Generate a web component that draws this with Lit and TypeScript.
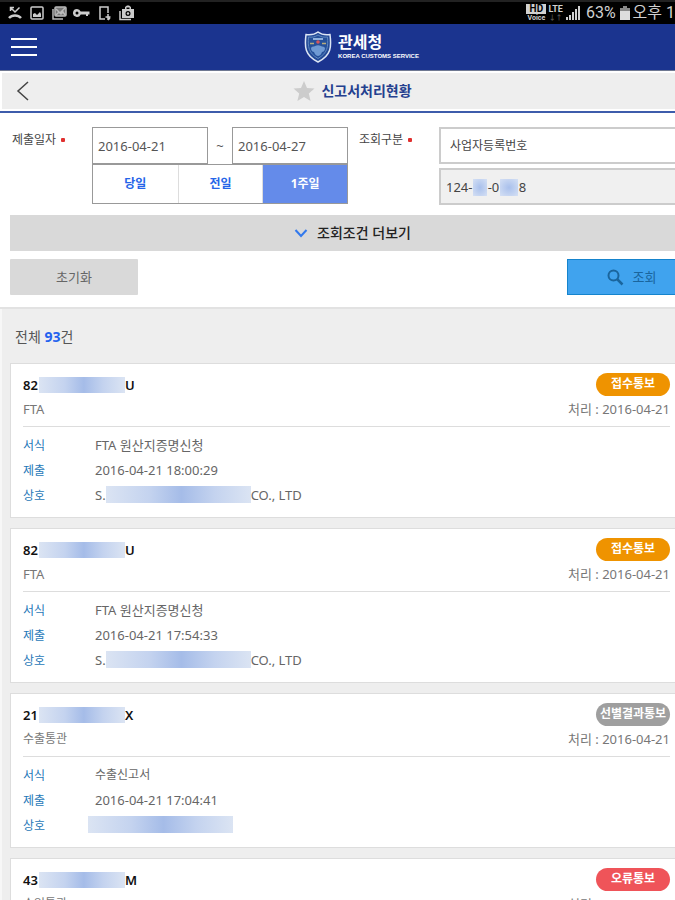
import { LitElement, html, css, svg, nothing } from "lit";
import { customElement, property } from "lit/decorators.js";

interface Declaration {
  head: string;
  tail: string;
  kind: string;
  status: string;
  tone: "orange" | "gray" | "red";
  form?: string;
  submitted?: string;
  nameStart?: string;
  nameEnd?: string;
}

const DECLARATIONS: Declaration[] = [
  { head: "82", tail: "U", kind: "FTA", status: "접수통보", tone: "orange", form: "FTA 원산지증명신청", submitted: "2016-04-21 18:00:29", nameStart: "S.", nameEnd: "CO., LTD" },
  { head: "82", tail: "U", kind: "FTA", status: "접수통보", tone: "orange", form: "FTA 원산지증명신청", submitted: "2016-04-21 17:54:33", nameStart: "S.", nameEnd: "CO., LTD" },
  { head: "21", tail: "X", kind: "수출통관", status: "선별결과통보", tone: "gray", form: "수출신고서", submitted: "2016-04-21 17:04:41" },
  { head: "43", tail: "M", kind: "수입통관", status: "오류통보", tone: "red" },
];

@customElement("status-bar")
class StatusBar extends LitElement {
  static styles = css`
    :host { display: flex; justify-content: space-between; align-items: center; height: 24px; box-sizing: border-box;
      border-top: 2px solid #222; background: #000; color: #d0d0d0; overflow: hidden; white-space: nowrap;
      font-family: Roboto, "Noto Sans CJK KR", sans-serif; font-size: 16px; line-height: 22px; }
    .left { display: flex; gap: 6px; padding-left: 7px; }
    .right { display: flex; align-items: center; }
    svg { display: block; }
    .hd { display: grid; justify-items: center; width: 20px; font-size: 7px; line-height: 8px; font-weight: 700; }
    .hd-box { background: #d0d0d0; color: #000; width: 20px; text-align: center; font-size: 10px; line-height: 10px; }
    .lte { display: grid; justify-items: center; margin: 0 2px; font-size: 9px; line-height: 10px; font-weight: 700; }
    .arrows { font-size: 7px; line-height: 8px; color: #555; }
    .signal { margin-right: 5px; }
    .battery { margin: 0 3px 0 4px; }
  `;
  render() {
    return html`
      <div class="left">
        <svg width="16" height="16" viewBox="0 0 16 16" fill="none" stroke="#ccc"><path d="M3.500 2.500L8 7l4.500-4.500M3.500 6V2.500H7" stroke-width="1.500"/><path d="M2 13c3-3.500 9-3.500 12 0" stroke-width="2.500"/></svg>
        <svg width="16" height="16" viewBox="0 0 16 16" fill="none" stroke="#ccc" stroke-width="1.500"><rect x="2" y="2" width="12" height="12" rx="1"/><path d="M4 12V9l2-1 2 2 3-3 1 2v3z" fill="#ccc" stroke="none"/></svg>
        <svg width="16" height="16" viewBox="0 0 16 16" fill="none" stroke="#bbb" stroke-width="1.500"><path d="M2 4v10h10"/><rect x="4" y="2" width="11" height="9" rx="1" fill="#777"/><path d="M5 4l4 4 5-5M5 10l3-3 2 2 2-2 2 3"/></svg>
        <svg width="17" height="16" viewBox="0 0 17 16" fill="#ccc"><path fill-rule="evenodd" d="M4 4a4 4 0 1 0 3.700 5.500H13V11h2V9.500h1.500v-3H7.700A4 4 0 0 0 4 4zm0 2.500a1.500 1.500 0 1 1 0 3 1.500 1.500 0 0 1 0-3z"/></svg>
        <svg width="16" height="16" viewBox="0 0 16 16" fill="none" stroke="#ccc" stroke-width="1.500"><path d="M12 8V2H4v12h5"/><path d="M12 9v6M9.500 12h5M12 15l2-2"/></svg>
        <svg width="18" height="16" viewBox="0 0 18 16" fill="#ccc"><path d="M2 6v8.500h11" fill="none" stroke="#ccc" stroke-width="1.500"/><path fill-rule="evenodd" d="M4 4h3V2l2-1.500h2L13 2v2h3v9H4zm4.500 0h3V2.500h-3zM10 6a2.500 2.500 0 1 0 0 5 2.500 2.500 0 0 0 0-5z"/><circle cx="10" cy="8.500" r="1.200"/></svg>
      </div>
      <div class="right">
        <div class="hd"><span class="hd-box">HD</span><span>Voice</span></div>
        <div class="lte"><span>LTE</span><span class="arrows">↓↑</span></div>
        <svg class="signal" width="16" height="14" viewBox="0 0 16 14" fill="#d0d0d0"><path d="M1 11h2v3H1zM4 9h2v5H4zM7 6h2v8H7zM10 3h2v11h-2zM13 0h2v14h-2z"/></svg>
        <span>63%</span>
        <svg class="battery" width="10" height="14" viewBox="0 0 10 14"><path d="M3 0h4v2h3v12H0V2h3z" fill="#888"/><path d="M0 5h10v9H0z" fill="#ddd"/></svg>
        <span>오후 1</span>
      </div>`;
  }
}

@customElement("declaration-card")
class DeclarationCard extends LitElement {
  @property({ attribute: false }) item!: Declaration;

  static styles = css`
    :host { display: block; box-sizing: border-box; padding: 8px 5px 10px 12px; background: #fff;
      border: 1px solid #ddd; border-right: 0; font-size: 13px; color: #666; }
    .line { display: flex; align-items: center; justify-content: space-between; height: 25px; }
    .sub { height: 24px; padding-bottom: 5px; border-bottom: 1px solid #ddd; color: #777; }
    .id { display: flex; align-items: center; margin: 0; color: #111; font-size: 13px; font-weight: 600; }
    .mask { background: linear-gradient(90deg, #dbe4f3, #c4d3ef 30%, #a5bce8 52%, #c4d3ef 75%, #dbe4f3); }
    .id .mask { width: 86px; height: 16px; margin-left: 1px; }
    .name .mask { width: 145px; height: 17px; }
    .pill { width: 74px; height: 23px; border-radius: 12px; color: #fff; text-align: center; font-size: 12px;
      line-height: 21px; font-weight: 700; white-space: nowrap; }
    .orange { background: #ef9300; }
    .gray { background: #9f9f9f; }
    .red { background: #ef5459; }
    .small { font-size: 12px; line-height: 22px; }
    dl { display: grid; grid-template-columns: 65px 1fr; grid-auto-rows: 25px; align-items: center; margin: 0; padding-top: 5px; }
    dt { padding-top: 2px; color: #1f78b8; font-size: 12px; }
    dd { margin: 0; padding-left: 7px; }
    .name { display: flex; align-items: center; }
    .hidden-name { padding-left: 0; }
  `;
  render() {
    const d = this.item;
    return html`
      <div class="line">
        <h2 class="id">${d.head}<span class="mask"></span>${d.tail}</h2>
        <span class="pill ${d.tone}">${d.status}</span>
      </div>
      <div class="line sub"><span class=${d.kind === "FTA" ? "" : "small"}>${d.kind}</span><span>처리 : 2016-04-21</span></div>
      ${d.form
        ? html`<dl>
            <dt>서식</dt><dd class=${d.nameStart ? "" : "small"}>${d.form}</dd>
            <dt>제출</dt><dd>${d.submitted}</dd>
            <dt>상호</dt>
            <dd class="name ${d.nameStart ? "" : "hidden-name"}">${d.nameStart ?? nothing}<span class="mask"></span>${d.nameEnd ?? nothing}</dd>
          </dl>`
        : nothing}`;
  }
}

const crest = svg`
  <path d="M14 1c4 3 8 3 12 2.500 1.500 12 1.500 21-12 27.500C.5 24.500.5 15.500 2 3.500 6 4 10 4 14 1z" fill="#234a97" stroke="#dce5f4" stroke-width="1.500"/>
  <path d="M14 4c3 2 6 2.500 9.500 2 .8 10 0 16-9.500 21.500C4.500 22 3.700 16 4.500 6 8 6.500 11 6 14 4z" fill="#25509a" stroke="#5f88c0"/>
  <path d="M9 7h10v2H9z" fill="#8fb0dc"/><circle cx="14" cy="11" r="1.800" fill="#d4555e"/>
  <path d="M6 12.500h4M18 12.500h4" fill="none" stroke="#b9ad7c" stroke-width="1.500"/>
  <path d="M7 17c1-2 3-1 4-2 2-1 4-1 6 0 1 1 3 0 4 2 0 3-2 4-3 4-1 3-3 4-4 4s-3-1-4-4c-1 0-3-1-3-4z" fill="#6f9ad4"/>`;

@customElement("app-root")
class AppRoot extends LitElement {
  static styles = css`
    :host { display: flex; flex-direction: column; height: 100vh; background: #eee; overflow: hidden;
      font-family: "Noto Sans", "Noto Sans CJK KR", sans-serif; font-size: 13px; line-height: 20px; color: #555; }
    *, *::before { box-sizing: border-box; }
    button, input, select { font: inherit; color: inherit; margin: 0; border-radius: 0; appearance: none; min-width: 0; }
    button { padding: 0; border: 0; background: none; }
    svg { display: block; flex: none; }
    status-bar, .brand, .title-bar { flex: none; }
    .brand { display: flex; align-items: center; height: 47px; background: #1b348f; border-bottom: 1px solid #6f7891; }
    .menu { width: 48px; padding-left: 11px; }
    .logo { flex: 1; display: flex; justify-content: center; align-items: center; gap: 6px; color: #fff; }
    .logo-name { display: grid; }
    .ko { font-size: 16px; line-height: 18px; font-weight: 700; }
    .en { font-family: "Liberation Sans", sans-serif; font-size: 6px; line-height: 10px; font-weight: 700; }
    .title-bar { display: flex; align-items: center; height: 42px; border-bottom: 2px solid #3d5cab;
      background: #eee; box-shadow: inset 2px 2px #fff, inset 0 -2px #fff; }
    .back { width: 30px; padding-left: 16px; }
    .title { flex: 1; display: flex; justify-content: center; align-items: center; gap: 6px; margin: 0;
      font-size: 14px; font-weight: 700; color: #24408f; }
    main { flex: 1; min-height: 0; overflow-y: auto; scrollbar-width: none; }
    form { padding: 14px 0 12px 10px; background: #fff; border-bottom: 2px solid #e2e2e2; }
    .fields { display: grid; grid-template-columns: 80px 256px 80px 1fr; padding-left: 2px; }
    .label { font-size: 12px; line-height: 26px; color: #444; }
    .label::after { content: ""; display: inline-block; width: 4px; height: 4px; margin: 0 0 2px 5px; border-radius: 1px; background: #e0302f; }
    .second { padding-left: 11px; width: 91px; }
    .range { display: grid; grid-template-columns: 1fr 24px 1fr; align-items: center; text-align: center; }
    .range input { width: 100%; height: 37px; padding: 0 5px; border: 1px solid #999; background: #fff; }
    .segments { display: grid; grid-template-columns: repeat(3, 1fr); height: 40px; border: 1px solid #999; }
    .segments button { color: #2565e8; font-size: 12px; font-weight: 700; }
    .segments button + button { border-left: 1px solid #ddd; }
    .segments .on { background: #648bea; color: #fff; }
    .query { display: grid; gap: 4px; padding-left: 11px; }
    .query select, .query input { width: 100%; height: 37px; border: 2px solid #ccc; border-right: 0; background: #fff; }
    .query select { padding: 0 9px; font-size: 12px; color: #444; }
    .number { position: relative; }
    .query input { padding: 0 5px; background: #f0f0f0; color: #444; }
    .blot { position: absolute; top: 11px; height: 17px; background: radial-gradient(#a9c0ec, #d5e0f4); }
    .blot-a { left: 34px; width: 14px; }
    .blot-b { left: 61px; width: 18px; }
    .more { display: flex; align-items: center; justify-content: center; gap: 9px; width: 100%; height: 36px; margin: 10px 0 8px;
      padding-left: 20px; background: #d9d9d9; color: #222; font-size: 14px; font-weight: 500; }
    .actions { display: flex; justify-content: space-between; height: 36px; }
    .reset { width: 128px; background: #d9d9d9; color: #666; border-radius: 1px; }
    .search { display: flex; align-items: center; justify-content: center; gap: 9px; width: 108px; padding-left: 20px;
      background: #40a3ee; border: 1px solid #1584cd; border-right: 0; color: #1a659d; }
    .results { padding: 15px 0 10px 8px; border-left: 2px solid #f7f7f7; }
    .total { margin: 0 0 13px 5px; font-size: 14px; line-height: 26px; color: #555; }
    .total strong { color: #2463ee; }
    .list { display: grid; gap: 10px; }
  `;
  render() {
    return html`
      <status-bar></status-bar>
      <header class="brand">
        <button class="menu" aria-label="메뉴"><svg width="26" height="22" viewBox="0 0 26 22" stroke="#fff" stroke-width="2"><path d="M0 3h26M0 11h26M0 19h26"/></svg></button>
        <div class="logo">
          <svg width="28" height="33" viewBox="0 0 28 33">${crest}</svg>
          <div class="logo-name"><span class="ko">관세청</span><span class="en">KOREA CUSTOMS SERVICE</span></div>
        </div>
      </header>
      <div class="title-bar">
        <button class="back" aria-label="뒤로"><svg width="14" height="22" viewBox="0 0 14 22" fill="none" stroke="#444" stroke-width="1.500"><path d="M12 2L2 11l10 9"/></svg></button>
        <h1 class="title"><svg width="22" height="22" viewBox="0 0 22 22" fill="#ccc"><path d="M11 1l3 7 7.500.6-5.700 4.900 1.800 7.500L11 17l-6.600 4 1.800-7.500L.5 8.600 8 8z"/></svg>신고서처리현황</h1>
      </div>
      <main>
        <form @submit=${(e: Event) => e.preventDefault()}>
          <div class="fields">
            <label class="label" for="from">제출일자</label>
            <div>
              <div class="range"><input id="from" value="2016-04-21" /><span>~</span><input aria-label="종료일" value="2016-04-27" /></div>
              <div class="segments"><button type="button">당일</button><button type="button">전일</button><button type="button" class="on">1주일</button></div>
            </div>
            <label class="label second" for="by">조회구분</label>
            <div class="query">
              <select id="by"><option>사업자등록번호</option></select>
              <div class="number">
                <input aria-label="번호" readonly .value=${"124-\u2003\u2009-0\u2003\u20028"} />
                <span class="blot blot-a"></span><span class="blot blot-b"></span>
              </div>
            </div>
          </div>
          <button type="button" class="more"><svg width="14" height="10" viewBox="0 0 14 10" fill="none" stroke="#3279ed" stroke-width="2"><path d="M1.500 2L7 8l5.500-6"/></svg>조회조건 더보기</button>
          <div class="actions">
            <button type="reset" class="reset">초기화</button>
            <button class="search"><svg width="17" height="17" viewBox="0 0 17 17" fill="none" stroke="#1a659d" stroke-width="2"><circle cx="6.500" cy="6.500" r="5"/><path d="M10 10l5.500 5.500" stroke-width="2.500"/></svg>조회</button>
          </div>
        </form>
        <section class="results">
          <p class="total">전체 <strong>93</strong>건</p>
          <div class="list">${DECLARATIONS.map((d) => html`<declaration-card .item=${d}></declaration-card>`)}</div>
        </section>
      </main>`;
  }
}
